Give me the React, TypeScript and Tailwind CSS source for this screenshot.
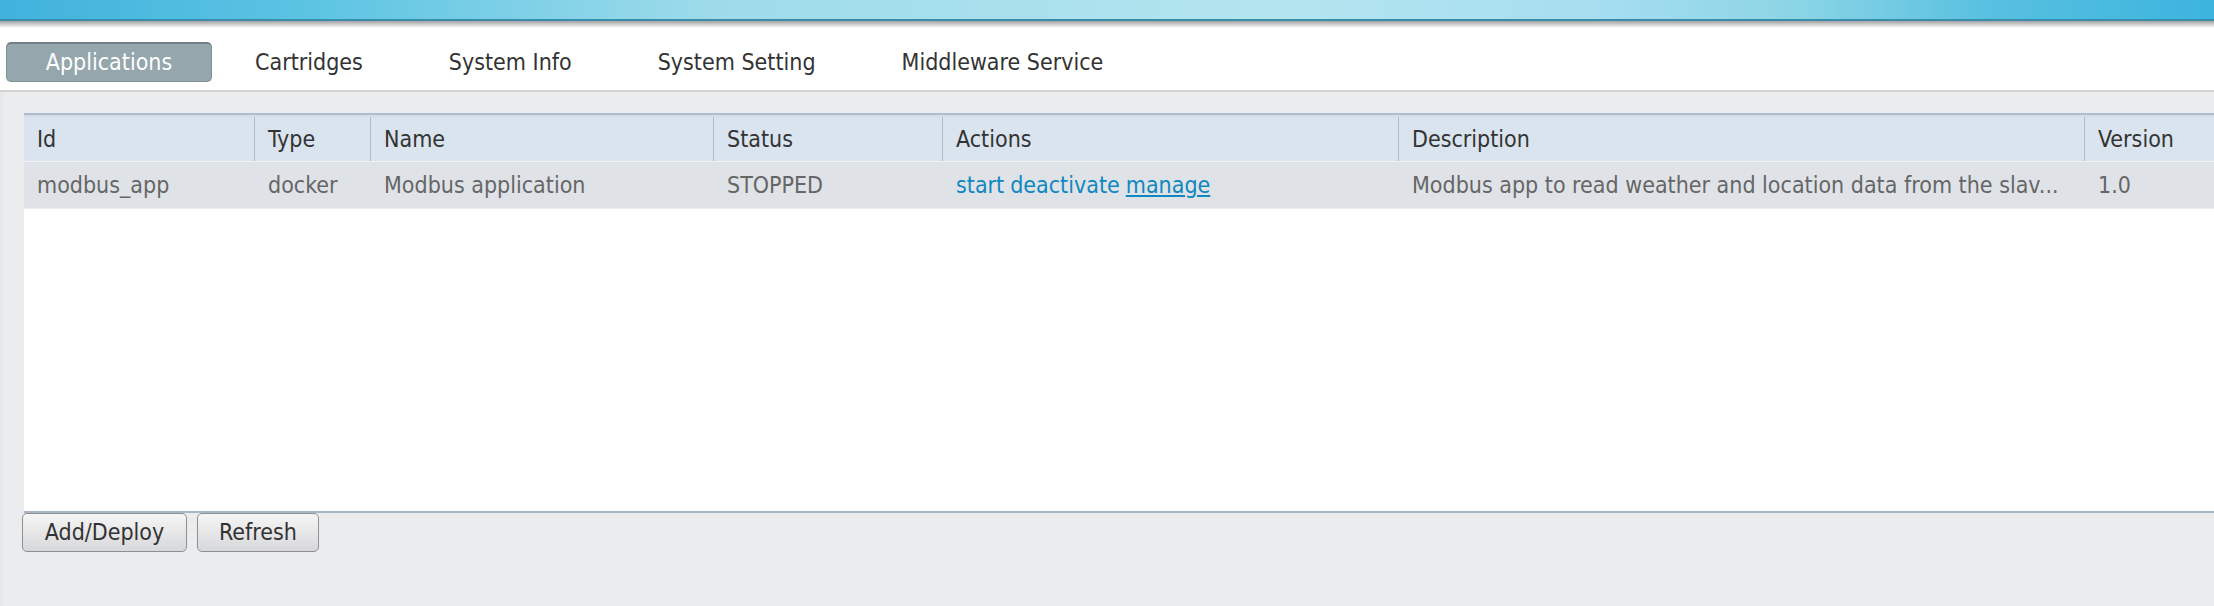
import { useState } from "react";

const tabs = ["Applications", "Cartridges", "System Info", "System Setting", "Middleware Service"];

const columns = [
  { label: "Id", width: "w-[230px]" },
  { label: "Type", width: "w-[116px]" },
  { label: "Name", width: "w-[343px]" },
  { label: "Status", width: "w-[229px]" },
  { label: "Actions", width: "w-[456px]" },
  { label: "Description", width: "w-[686px]" },
  { label: "Version", width: "w-[200px]" },
];

export default function App() {
  const [active, setActive] = useState("Applications");

  return (
    <div className="w-full h-[606px] overflow-hidden flex flex-col bg-white font-['DejaVu_Sans_Condensed','DejaVu_Sans',sans-serif]">
      {/* Top banner */}
      <div className="h-[21px] shrink-0 border-b-2 border-[#3a8cab] bg-[linear-gradient(90deg,#40b2dc_0%,#5cc4e3_14%,#9ddbea_32%,#b4e5ef_58%,#a6def0_72%,#8cd5e6_81%,#57c0e0_90%,#3cb4de_100%)]" />
      <div className="h-[7px] shrink-0 bg-gradient-to-b from-[#a3a3a3] to-white" />

      {/* Tabs */}
      <div className="h-[62px] shrink-0 flex items-start pt-[14px] pl-[6px]">
        {tabs.map((t) => (
          <button
            key={t}
            onClick={() => setActive(t)}
            className={
              t === active
                ? "h-[40px] w-[206px] rounded-[5px] bg-[#95a6ac] border border-[#7f9096] border-t-2 border-t-[#6f7f85] text-white text-[23px] leading-none"
                : "h-[40px] px-[43px] text-[#333] text-[23px] leading-none"
            }
          >
            {t}
          </button>
        ))}
      </div>
      <div className="h-[2px] shrink-0 bg-[#d3d3d3]" />

      {/* Content */}
      <div className="flex-1 bg-[#ebecee] border-l-[3px] border-[#e6e7e9] pl-[21px] pt-[21px] flex flex-col">
        <div className="w-[2300px] h-[400px] bg-white flex flex-col border-t-2 border-[#b0bdcb] border-b-2 border-b-[#a9b6c5]">
          <div className="h-[2px] bg-[#d3dde8]" />
          {/* Header */}
          <div className="flex h-[45px] bg-[#d9e4ef] text-[#333] text-[23px] border-b border-[#eef2f6]">
            {columns.map((c, i) => (
              <div
                key={c.label}
                className={`${c.width} flex items-center pl-[13px] ${i > 0 ? "border-l border-[#aebdcc]" : ""}`}
              >
                {c.label}
              </div>
            ))}
          </div>
          {/* Row */}
          <div className="flex h-[47px] bg-[#dfe3e8] text-[#666] text-[23px] border-b border-[#eceef1]">
            <div className="w-[230px] flex items-center pl-[13px]">modbus_app</div>
            <div className="w-[116px] flex items-center pl-[14px]">docker</div>
            <div className="w-[343px] flex items-center pl-[14px]">Modbus application</div>
            <div className="w-[229px] flex items-center pl-[14px]">STOPPED</div>
            <div className="w-[456px] flex items-center pl-[14px] text-[#0f87c0] gap-[6px]">
              <span>start</span>
              <span>deactivate</span>
              <span className="underline">manage</span>
            </div>
            <div className="w-[686px] flex items-center pl-[14px] whitespace-nowrap overflow-hidden">
              Modbus app to read weather and location data from the slav...
            </div>
            <div className="w-[200px] flex items-center pl-[14px]">1.0</div>
          </div>
        </div>

        {/* Buttons */}
        <div className="flex gap-[10px] -ml-[2px]">
          <button className="w-[165px] h-[39px] rounded-[5px] border border-[#8f8f8f] bg-gradient-to-b from-[#f6f6f6] to-[#d7d8da] text-[#333] text-[23px] leading-none">
            Add/Deploy
          </button>
          <button className="w-[122px] h-[39px] rounded-[5px] border border-[#8f8f8f] bg-gradient-to-b from-[#f6f6f6] to-[#d7d8da] text-[#333] text-[23px] leading-none">
            Refresh
          </button>
        </div>
      </div>
    </div>
  );
}
